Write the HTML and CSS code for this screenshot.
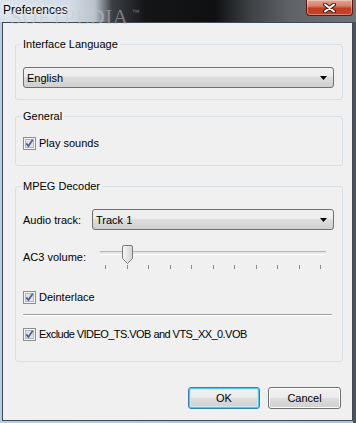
FILE: index.html
```html
<!DOCTYPE html>
<html lang="en">
<head>
    <meta charset="UTF-8">
    <title>Preferences</title>
    <link rel="stylesheet" href="styles.css">
</head>
<body>

    <div class="window">
        <!-- Title bar -->
        <div class="titlebar">
            <span class="title">Preferences</span>
            <div class="close-btn">
                <svg width="13" height="10" viewBox="0 0 13 10">
                    <path d="M2 1.5l9 7M11 1.5l-9 7" stroke="#3b1d17" stroke-width="4" stroke-linecap="round"/>
                    <path d="M2 1.5l9 7M11 1.5l-9 7" stroke="#fff" stroke-width="2" stroke-linecap="round"/>
                </svg>
            </div>
        </div>

        <div class="watermark">SOFTPEDIA<span class="tm">™</span></div>

        <!-- Dialog body -->
        <div class="client">
            <fieldset class="group group-lang">
                <legend>Interface Language</legend>
                <div class="combo">
                    <span>English</span>
                    <svg class="arrow" width="7" height="4" viewBox="0 0 7 4"><path d="M0 0h7L3.5 4z"/></svg>
                </div>
            </fieldset>

            <fieldset class="group group-general">
                <legend>General</legend>
                <label class="check">
                    <svg class="box" width="13" height="13" viewBox="0 0 13 13">
                        <rect x="0.5" y="0.5" width="12" height="12" fill="#f4f4f4" stroke="#8e8f8f"/>
                        <rect x="2.5" y="2.5" width="8" height="8" fill="#e2e3e4" stroke="#b4b8bd"/>
                        <path d="M3.3 6.4l2.1 2.6 4.3-6.2" fill="none" stroke="#4a5f98" stroke-width="1.7"/>
                    </svg>
                    Play sounds
                </label>
            </fieldset>

            <fieldset class="group group-mpeg">
                <legend>MPEG Decoder</legend>
                <div class="field-row">
                    <span class="field-label">Audio track:</span>
                    <div class="combo combo-grow">
                        <span>Track 1</span>
                        <svg class="arrow" width="7" height="4" viewBox="0 0 7 4"><path d="M0 0h7L3.5 4z"/></svg>
                    </div>
                </div>

                <div class="field-row slider-row">
                    <span class="field-label field-label-wide">AC3 volume:</span>
                    <div class="slider">
                        <div class="slider-track"></div>
                        <div class="slider-ticks">
                            <i></i><i></i><i></i><i></i><i></i><i></i><i></i><i></i><i></i><i></i><i></i>
                        </div>
                        <svg class="slider-thumb" style="left: 22px" width="11" height="19" viewBox="0 0 11 19">
                            <defs>
                                <linearGradient id="thumbFill" x1="0" y1="0" x2="1" y2="0">
                                    <stop offset="0" stop-color="#f7f7f7"/>
                                    <stop offset="1" stop-color="#d3d3d3"/>
                                </linearGradient>
                            </defs>
                            <path d="M0.5 2Q0.5 0.5 2 0.5H9Q10.5 0.5 10.5 2V13.5L5.5 18.5L0.5 13.5Z" fill="url(#thumbFill)" stroke="#7a7a7a"/>
                        </svg>
                    </div>
                </div>

                <label class="check check-deinterlace">
                    <svg class="box" width="13" height="13" viewBox="0 0 13 13">
                        <rect x="0.5" y="0.5" width="12" height="12" fill="#f4f4f4" stroke="#8e8f8f"/>
                        <rect x="2.5" y="2.5" width="8" height="8" fill="#e2e3e4" stroke="#b4b8bd"/>
                        <path d="M3.3 6.4l2.1 2.6 4.3-6.2" fill="none" stroke="#4a5f98" stroke-width="1.7"/>
                    </svg>
                    Deinterlace
                </label>

                <hr class="separator">

                <label class="check check-exclude">
                    <svg class="box" width="13" height="13" viewBox="0 0 13 13">
                        <rect x="0.5" y="0.5" width="12" height="12" fill="#f4f4f4" stroke="#8e8f8f"/>
                        <rect x="2.5" y="2.5" width="8" height="8" fill="#e2e3e4" stroke="#b4b8bd"/>
                        <path d="M3.3 6.4l2.1 2.6 4.3-6.2" fill="none" stroke="#4a5f98" stroke-width="1.7"/>
                    </svg>
                    <span class="caps-text">Exclude VIDEO_TS.VOB and VTS_XX_0.VOB</span>
                </label>
            </fieldset>

            <div class="buttons">
                <button class="btn btn-default">OK</button>
                <button class="btn btn-cancel">Cancel</button>
            </div>
        </div>
    </div>

</body>
</html>
```

FILE: styles.css
```css
/* Theme */
:root {
    --dialog-bg: #f0f0f0;
    --group-border: #d5dfe5;
    --ctrl-border: #707070;
    --text: #000;
    --font: "Liberation Sans", Arial, sans-serif;
}

* {
    box-sizing: border-box;
}

body {
    margin: 0;
    font-family: var(--font);
    font-size: 11px;
    color: var(--text);
}

/* Window frame */
.window {
    position: relative;
    width: 356px;
    height: 423px;
    display: flex;
    flex-direction: column;
    background: linear-gradient(to right, #b6cce4 0, #aac3de 353px, #4b535c 353px);
    overflow: hidden;
}

.titlebar {
    height: 22px;
    display: flex;
    justify-content: space-between;
    align-items: flex-start;
    background: linear-gradient(to right,
        #dbe3ec 0, #d3dce6 70px, #b9c2cb 95px, #3c4045 112px,
        #141517 145px, #0f1012 215px, #3e4245 250px, #5f6367 290px, #6f7377 356px);
}

.title {
    padding-left: 3px;
    line-height: 20px;
    font-size: 12px;
    color: #000;
    text-shadow: 0 0 6px #fff, 0 0 3px #fff;
}

.close-btn {
    width: 47px;
    height: 16px;
    margin-right: 3px;
    display: flex;
    justify-content: center;
    align-items: center;
    border: 1px solid #5a1c12;
    border-top: none;
    border-radius: 0 0 4px 4px;
    background: linear-gradient(#e3a595 0, #d57f69 40%, #c33d20 55%, #c4452a 100%);
    box-shadow: inset 0 0 0 1px rgba(255, 255, 255, 0.35);
}

/* Watermark overlay */
.watermark {
    position: absolute;
    top: 5px;
    left: 10px;
    font-family: "Liberation Serif", serif;
    font-size: 21px;
    letter-spacing: 0.6px;
    color: rgba(200, 200, 200, 0.5);
    pointer-events: none;
}

.watermark .tm {
    font-family: var(--font);
    font-size: 8px;
    vertical-align: 9px;
    margin-left: 3px;
}

/* Client area */
.client {
    flex: 1;
    margin: 0 3px 2px 2px;
    border: 1px solid #3f4a55;
    background: var(--dialog-bg);
    padding: 14px 9px 0 12px;
    display: flex;
    flex-direction: column;
}

/* Group boxes */
.group {
    margin: 0;
    min-width: 0;
    padding: 0 8px 0 7px;
    border: 1px solid var(--group-border);
    border-radius: 3px;
}

.group legend {
    padding: 0 2px;
    margin-left: -2px;
    line-height: 15px;
}

.group-lang {
    padding-bottom: 11px;
}

.group-lang .combo {
    margin-top: 15px;
}

.group-general {
    margin-top: 9px;
    padding-bottom: 15px;
}

.group-general .check {
    margin-top: 13px;
}

.group-mpeg {
    margin-top: 13px;
    padding-bottom: 20px;
}

/* Dropdowns */
.combo {
    height: 21px;
    padding: 0 6px 0 3px;
    display: flex;
    justify-content: space-between;
    align-items: center;
    border: 1px solid var(--ctrl-border);
    border-radius: 3px;
    background: linear-gradient(#f2f2f2 0, #ebebeb 50%, #dddddd 50%, #cfcfcf 100%);
}

.combo-grow {
    flex: 1;
}

/* Label + control rows */
.field-row {
    display: flex;
    align-items: center;
    margin-top: 15px;
}

.field-label {
    width: 69px;
    flex-shrink: 0;
}

.field-label-wide {
    width: 77px;
}

/* Trackbar */
.slider {
    position: relative;
    width: 226px;
    height: 24px;
}

.slider-track {
    margin-top: 6px;
    height: 4px;
    border-top: 1px solid #b1b6b8;
    border-bottom: 1px solid #fff;
    background: #e4e6e7;
}

.slider-ticks {
    margin-top: 10px;
    padding: 0 5px;
    display: flex;
    justify-content: space-between;
}

.slider-ticks i {
    width: 1px;
    height: 4px;
    background: #8a8a8a;
}

.slider-thumb {
    position: absolute;
    top: 0;
}

/* Checkboxes */
.check {
    display: flex;
    align-items: center;
    gap: 3px;
    height: 13px;
    line-height: 13px;
}

.check-deinterlace {
    margin-top: 22px;
}

.check-exclude {
    margin-top: 12px;
}

/* Tahoma caps run narrower than Arial's */
.caps-text {
    letter-spacing: -0.55px;
}

.separator {
    margin: 10px 2px 0 0;
    height: 0;
    border: none;
    border-top: 1px solid #a0a0a0;
    border-bottom: 1px solid #fff;
}

/* Dialog buttons */
.buttons {
    margin: 25px 2px 0 0;
    display: flex;
    justify-content: flex-end;
    gap: 8px;
}

.btn {
    height: 22px;
    padding: 0;
    font-family: var(--font);
    font-size: 11px;
    color: var(--text);
    border: 1px solid var(--ctrl-border);
    border-radius: 3px;
    background: linear-gradient(#f2f2f2 0, #ebebeb 50%, #dddddd 50%, #cfcfcf 100%);
    box-shadow: inset 0 0 0 1px #fcfcfc;
}

.btn-default {
    width: 72px;
    border-color: #3c7fb1;
    box-shadow: inset 0 0 0 1px #4fc6f3, inset 0 0 0 2px #c5ebfb;
}

.btn-cancel {
    width: 73px;
}
```
